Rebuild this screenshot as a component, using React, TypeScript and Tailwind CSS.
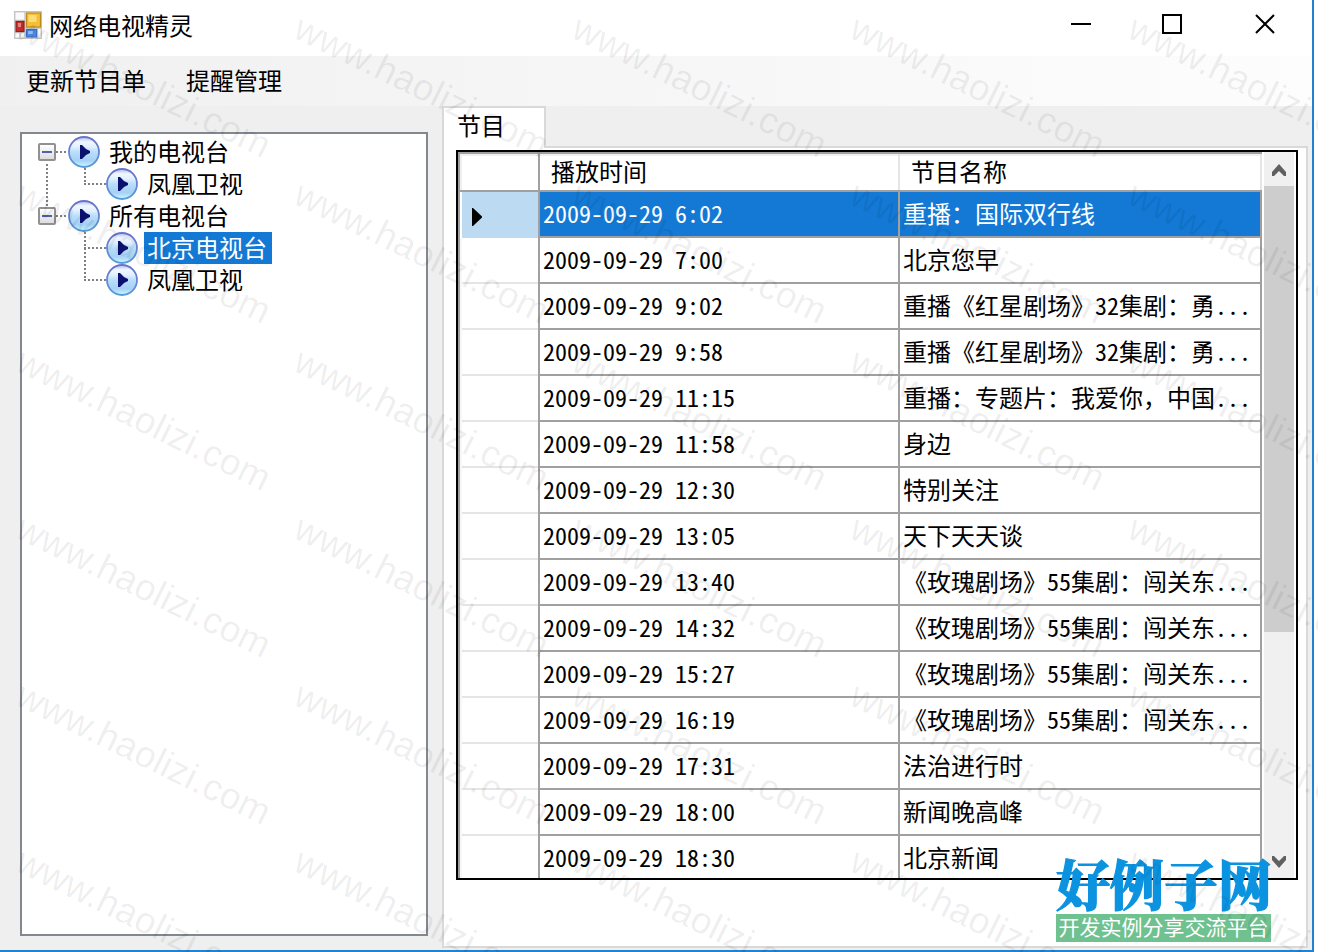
import React from 'react';

interface Program {
  time: string;
  name: string;
}

const programs: Program[] = [
  { time: '2009-09-29 6:02', name: '重播：国际双行线' },
  { time: '2009-09-29 7:00', name: '北京您早' },
  { time: '2009-09-29 9:02', name: '重播《红星剧场》32集剧：勇...' },
  { time: '2009-09-29 9:58', name: '重播《红星剧场》32集剧：勇...' },
  { time: '2009-09-29 11:15', name: '重播：专题片：我爱你，中国...' },
  { time: '2009-09-29 11:58', name: '身边' },
  { time: '2009-09-29 12:30', name: '特别关注' },
  { time: '2009-09-29 13:05', name: '天下天天谈' },
  { time: '2009-09-29 13:40', name: '《玫瑰剧场》55集剧：闯关东...' },
  { time: '2009-09-29 14:32', name: '《玫瑰剧场》55集剧：闯关东...' },
  { time: '2009-09-29 15:27', name: '《玫瑰剧场》55集剧：闯关东...' },
  { time: '2009-09-29 16:19', name: '《玫瑰剧场》55集剧：闯关东...' },
  { time: '2009-09-29 17:31', name: '法治进行时' },
  { time: '2009-09-29 18:00', name: '新闻晚高峰' },
  { time: '2009-09-29 18:30', name: '北京新闻' },
];

const AppIcon = () => (
  <svg className="w-7 h-7 shrink-0" viewBox="0 0 28 28">
    <rect x="0.7" y="0.7" width="26.6" height="26.6" fill="#fafafa" stroke="#c4c4c4" strokeWidth="1.4" />
    <path d="M11 1v26M1 9.5h10M1 21.5h10M11 17h16M23.5 17v10M6 21.5v5" stroke="#c4c4c4" strokeWidth="1.3" />
    <rect x="12.5" y="2" width="14" height="14" fill="#f4bf35" stroke="#b98a1c" strokeWidth="1.2" />
    <rect x="14.5" y="4" width="8" height="7" fill="#fbdc78" />
    <rect x="2" y="10.5" width="8" height="10" fill="#c5302a" stroke="#9b1d1a" strokeWidth="1.2" />
    <rect x="4" y="12" width="3" height="4" fill="#e6817c" />
    <rect x="12.5" y="18.5" width="10" height="7.5" fill="#4a8ae4" stroke="#3a6fc6" strokeWidth="1.2" />
    <rect x="14" y="20" width="5" height="3" fill="#8fbcf5" />
  </svg>
);

const PlayIcon = () => (
  <svg className="w-8 h-8 shrink-0" viewBox="0 0 32 32">
    <defs>
      <linearGradient id="ball" x1="0" y1="0" x2="0" y2="1">
        <stop offset="0" stopColor="#a9bdf0" />
        <stop offset="0.16" stopColor="#f2f7ff" />
        <stop offset="0.32" stopColor="#e2f0ff" />
        <stop offset="0.5" stopColor="#b8defa" />
        <stop offset="0.78" stopColor="#a6d0f5" />
        <stop offset="1" stopColor="#c4fbff" />
      </linearGradient>
      <linearGradient id="rim" x1="0" y1="0" x2="0" y2="1">
        <stop offset="0" stopColor="#6a72cc" />
        <stop offset="0.5" stopColor="#6585cf" />
        <stop offset="1" stopColor="#5a9ad8" />
      </linearGradient>
    </defs>
    <circle cx="16" cy="16" r="15" fill="url(#ball)" stroke="url(#rim)" strokeWidth="1.8" />
    <path d="M12 9h2l2 2 2 2 4 2v2l-4 2-2 2-2 2h-2z" fill="#0b1170" />
  </svg>
);

const Expander = () => (
  <span className="w-[18px] h-[18px] shrink-0 border-2 border-[#919191] rounded-[2px] bg-linear-to-b from-white to-[#dcdcdc] flex items-center justify-center">
    <span className="w-2.5 h-0.5 bg-[#4b63a7]" />
  </span>
);

const HDots = ({ className }: { className: string }) => (
  <span className={`h-0.5 shrink-0 bg-[repeating-linear-gradient(90deg,#808080_0_2px,transparent_2px_4px)] ${className}`} />
);

const VDots = ({ className }: { className: string }) => (
  <span className={`absolute w-0.5 bg-[repeating-linear-gradient(180deg,#808080_0_2px,transparent_2px_4px)] ${className}`} />
);

const Parent = ({ label }: { label: string }) => (
  <div className="flex items-center h-8 pl-4">
    <Expander />
    <HDots className="w-3" />
    <PlayIcon />
    <span className="pl-[9px] pb-0.5">{label}</span>
  </div>
);

const Child = ({ label, selected = false }: { label: string; selected?: boolean }) => (
  <div className="flex items-center h-8 pl-[62px]">
    <HDots className="w-[22px]" />
    <PlayIcon />
    <span className={`ml-1.5 h-8 leading-[30px] pl-[3px] pr-[5px] ${selected ? 'bg-[#1379d5] text-white' : ''}`}>{label}</span>
  </div>
);

// Latin runs take half-width glyphs, Chinese punctuation keeps the full cell
const CellText = ({ text }: { text: string }) => (
  <span className="pb-0.5">
    {text.split(/([\x20-\x7e]+)/).map((part, i) =>
      i % 2 ? <span key={i} className="[font-feature-settings:'hwid']">{part}</span> : part
    )}
  </span>
);

const Watermark = () => (
  <div className="absolute inset-0 overflow-hidden pointer-events-none z-20">
    <div className="grid grid-cols-[repeat(5,278px)] auto-rows-[166.8px] pl-[27px] pt-[8.5px] w-[1420px]">
      {Array.from({ length: 30 }, (_, i) => (
        <span
          key={i}
          className="block origin-top-left rotate-[26deg] whitespace-nowrap font-['Liberation_Sans',sans-serif] text-[37px] tracking-[0.3px] leading-none text-black/[0.07]"
        >
          www.haolizi.com
        </span>
      ))}
    </div>
  </div>
);

export default function App() {
  return (
    <div className="relative w-[1318px] h-[952px] overflow-hidden bg-white text-black text-[24px] leading-none whitespace-nowrap font-['Noto_Sans_CJK_SC',sans-serif]">
      <div className="w-[1314px] h-full flex flex-col border-r-2 border-b-2 border-[#1f82d2] bg-[#efefef]">
        {/* Title bar */}
        <div className="h-14 shrink-0 bg-white flex items-start">
          <div className="flex items-center pl-3.5 pt-[11px] h-[39px]">
            <AppIcon />
            <span className="pl-[7px]">网络电视精灵</span>
          </div>
          <svg className="ml-auto mt-3 mr-[34px] w-[208px] h-6" viewBox="0 0 208 24" fill="none" stroke="#000" strokeWidth="2">
            <path d="M1 12h20" />
            <rect x="93" y="3" width="18" height="18" />
            <path d="M186 3l18 18M204 3l-18 18" />
          </svg>
        </div>

        {/* Menu */}
        <div className="h-[50px] shrink-0 flex items-center gap-10 pl-[26px] pb-0.5 bg-linear-to-r from-[#f0f0f0] to-[#fdfdfd]">
          <span>更新节目单</span>
          <span>提醒管理</span>
        </div>

        <div className="flex-1 min-h-0 flex">
          {/* Channel tree */}
          <div className="relative ml-5 mt-[26px] w-[408px] h-[804px] shrink-0 border-2 border-[#828790] bg-white pt-0.5">
            <VDots className="left-6 top-[30px] h-[42px]" />
            <VDots className="left-[62px] top-[34px] h-4" />
            <VDots className="left-[62px] top-[98px] h-12" />
            <Parent label="我的电视台" />
            <Child label="凤凰卫视" />
            <Parent label="所有电视台" />
            <Child label="北京电视台" selected />
            <Child label="凤凰卫视" />
          </div>

          {/* Tab control */}
          <div className="ml-3.5 w-[866px] h-[842px] flex flex-col">
            <div className="flex h-[42px] shrink-0">
              <div className="w-[104px] border-2 border-b-0 border-[#d9d9d9] bg-white pl-[13px] pt-[5px]">节目</div>
              <div className="flex-1 border-b-2 border-[#d9d9d9]" />
            </div>
            <div className="flex-1 border-2 border-t-0 border-[#d9d9d9] bg-white pl-3 pt-0.5">
              <div className="w-[842px] h-[730px] border-2 border-black bg-white flex overflow-hidden">
                {/* Program grid */}
                <div className="w-[804px] shrink-0 h-full border-l-2 border-t-2 border-[#a0a0a0]">
                  <div className="flex h-[38px] border-b-2 border-[#a0a0a0]">
                    <div className="w-20 border-r-2 border-[#a0a0a0] shadow-[inset_2px_2px_0_#efefef]" />
                    <div className="w-[360px] pl-[11px] pb-0.5 flex items-center border-r-2 border-r-[#e5e5e5] shadow-[inset_0_2px_0_#efefef]">播放时间</div>
                    <div className="w-[362px] pl-[11px] pb-0.5 flex items-center border-r-2 border-r-[#e5e5e5] shadow-[inset_0_2px_0_#efefef]">节目名称</div>
                  </div>
                  {programs.map((p, i) => (
                    <div key={p.time} className="flex h-[46px]">
                      <div className={`w-20 shrink-0 pl-0.5 border-r-2 border-[#a0a0a0] ${i === 0 ? '' : 'shadow-[inset_2px_0_0_#f7f7f7]'}`}>
                        <div className={`h-full pl-2.5 flex items-center ${i === 0 ? 'bg-[#bcdbf3]' : 'border-b-2 border-[#e5e5e5]'}`}>
                          {i === 0 && (
                            <svg className="w-2.5 h-[18px] mt-1" viewBox="0 0 10 18">
                              <path d="M0 0h1l9 8.5v1L1 18H0z" />
                            </svg>
                          )}
                        </div>
                      </div>
                      <div className={`w-[360px] shrink-0 pl-[3px] flex items-center border-r-2 border-b-2 border-[#a0a0a0] ${i === 0 ? 'bg-[#1379d5] text-white' : ''}`}>
                        <CellText text={p.time} />
                      </div>
                      <div className={`w-[362px] shrink-0 pl-[3px] flex items-center border-r-2 border-b-2 border-[#a0a0a0] ${i === 0 ? 'bg-[#1379d5] text-white' : ''}`}>
                        <CellText text={p.name} />
                      </div>
                    </div>
                  ))}
                </div>

                {/* Scroll bar */}
                <div className="ml-0.5 w-[30px] h-full bg-[#f0f0f0] flex flex-col items-center text-[#606060]">
                  <svg className="w-[30px] h-[34px] shrink-0" viewBox="0 0 30 34">
                    <path d="M8 24v-4l7-8 7 8v4h-2l-5-5-5 5z" fill="currentColor" />
                  </svg>
                  <div className="w-full h-[446px] bg-[#cdcdcd]" />
                  <svg className="w-[30px] h-[34px] shrink-0 mt-auto" viewBox="0 0 30 34">
                    <path d="M8 12v4l7 8 7-8v-4h-2l-5 5-5-5z" fill="currentColor" />
                  </svg>
                </div>
              </div>
            </div>
          </div>
        </div>
      </div>

      {/* Site logo */}
      <div className="absolute left-[1056px] top-[857px] w-[215px] z-10">
        <div className="h-[57px] text-[54px] leading-[52px] font-black text-[#0c93e0] [-webkit-text-stroke:1.2px_#0c93e0] font-['Noto_Serif_CJK_SC','Noto_Sans_CJK_SC',serif]">好例子网</div>
        <div className="h-7 bg-[#70c190] text-white text-[21px] leading-[25px] text-center">开发实例分享交流平台</div>
      </div>

      <Watermark />
    </div>
  );
}
